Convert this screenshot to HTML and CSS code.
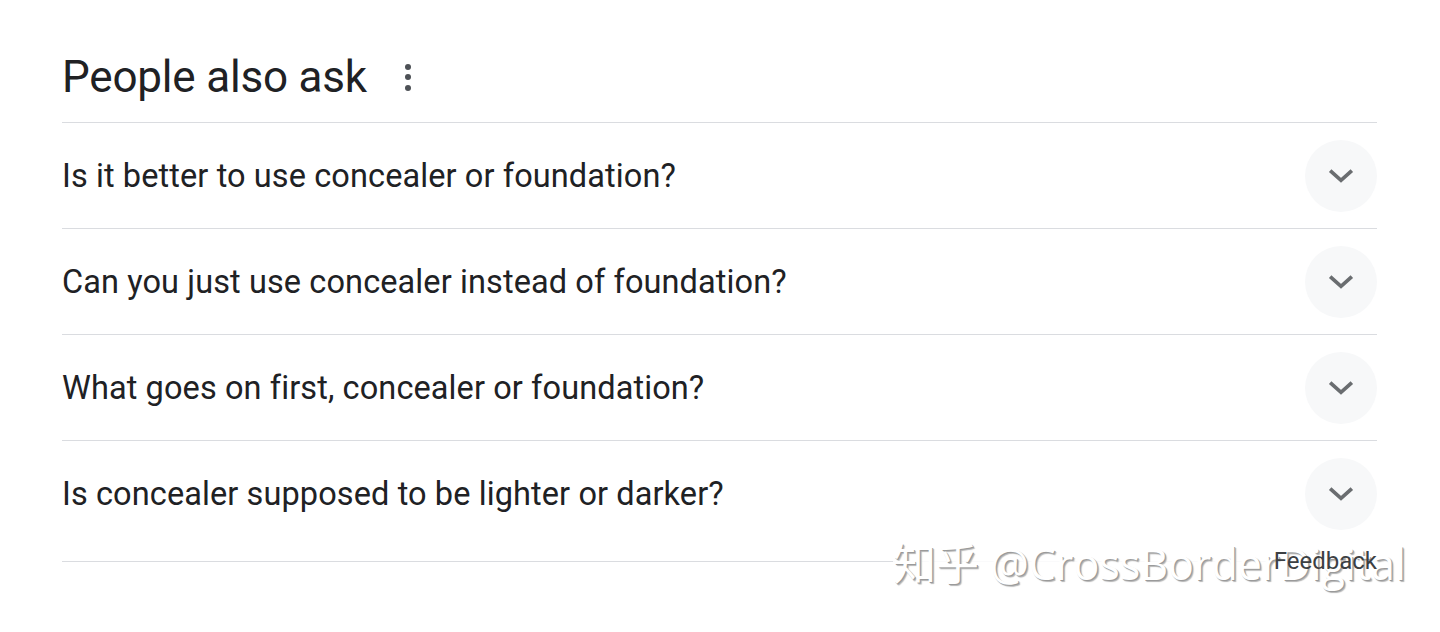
FILE: index.html
```html
<!DOCTYPE html>
<html lang="en">
<head>
  <meta charset="utf-8" />
  <title>People also ask</title>
  <link rel="stylesheet" href="styles.css">
</head>
<body>
  <div class="paa">
    <div class="paa-head">
      <h2>People also ask</h2>
      <span class="more" aria-label="More options"><i></i><i></i><i></i></span>
    </div>
    <div class="paa-list">
      <div class="paa-item">
        <span class="question">Is it better to use concealer or foundation?</span>
        <span class="toggle"><svg viewBox="0 0 24 24" width="26" height="26"><path d="M2 7 L12 16 L22 7" fill="none" stroke="#6a6d70" stroke-width="3.4"/></svg></span>
      </div>
      <div class="paa-item">
        <span class="question">Can you just use concealer instead of foundation?</span>
        <span class="toggle"><svg viewBox="0 0 24 24" width="26" height="26"><path d="M2 7 L12 16 L22 7" fill="none" stroke="#6a6d70" stroke-width="3.4"/></svg></span>
      </div>
      <div class="paa-item">
        <span class="question">What goes on first, concealer or foundation?</span>
        <span class="toggle"><svg viewBox="0 0 24 24" width="26" height="26"><path d="M2 7 L12 16 L22 7" fill="none" stroke="#6a6d70" stroke-width="3.4"/></svg></span>
      </div>
      <div class="paa-item">
        <span class="question">Is concealer supposed to be lighter or darker?</span>
        <span class="toggle"><svg viewBox="0 0 24 24" width="26" height="26"><path d="M2 7 L12 16 L22 7" fill="none" stroke="#6a6d70" stroke-width="3.4"/></svg></span>
      </div>
    </div>
    <div class="paa-foot">
      <span class="watermark">知乎 @CrossBorderDigital</span>
      <span class="feedback">Feedback</span>
    </div>
  </div>
</body>
</html>
```

FILE: styles.css
```css
body {
  margin: 0;
  background: #fff;
  color: #202124;
  font-family: Roboto, "Liberation Sans", Arial, sans-serif;
}
.paa {
  width: 1315px;
  margin-left: 62px;
}
.paa-head {
  display: flex;
  align-items: center;
  gap: 38px;
  height: 123px;
  border-bottom: 1px solid #dadce0;
  box-sizing: border-box;
  padding-top: 32px;
}
.paa-head h2 {
  margin: 0;
  font-size: 44px;
  font-weight: 400;
  letter-spacing: -0.2px;
}
.more {
  display: flex;
  flex-direction: column;
  gap: 4.5px;
}
.more i {
  display: block;
  width: 6px;
  height: 6px;
  border-radius: 50%;
  background: #4d5156;
}
.paa-item {
  display: flex;
  align-items: center;
  justify-content: space-between;
  height: 106px;
  box-sizing: border-box;
  border-bottom: 1px solid #dadce0;
}
.paa-item:last-child {
  border-bottom: none;
}
.question {
  font-size: 32.5px;
  letter-spacing: 0.1px;
}
.toggle {
  display: flex;
  align-items: center;
  justify-content: center;
  width: 72px;
  height: 72px;
  border-radius: 50%;
  background: #f7f8f9;
}
.paa-foot {
  position: relative;
  margin-top: 14px;
  border-top: 1px solid #dadce0;
  height: 60px;
}
.feedback {
  position: absolute;
  right: 0;
  top: -15px;
  font-size: 24px;
  color: #3c4043;
}
.watermark {
  position: absolute;
  left: 831px;
  top: -32px;
  background: rgba(255, 255, 255, 0.85);
  font-family: "Open Sans", "Noto Sans CJK SC", sans-serif;
  font-size: 43px;
  color: #fff;
  text-shadow: 1px 1px 0 #9a9a9a, 2px 2px 1px #b5b5b5;
  white-space: nowrap;
}
```
